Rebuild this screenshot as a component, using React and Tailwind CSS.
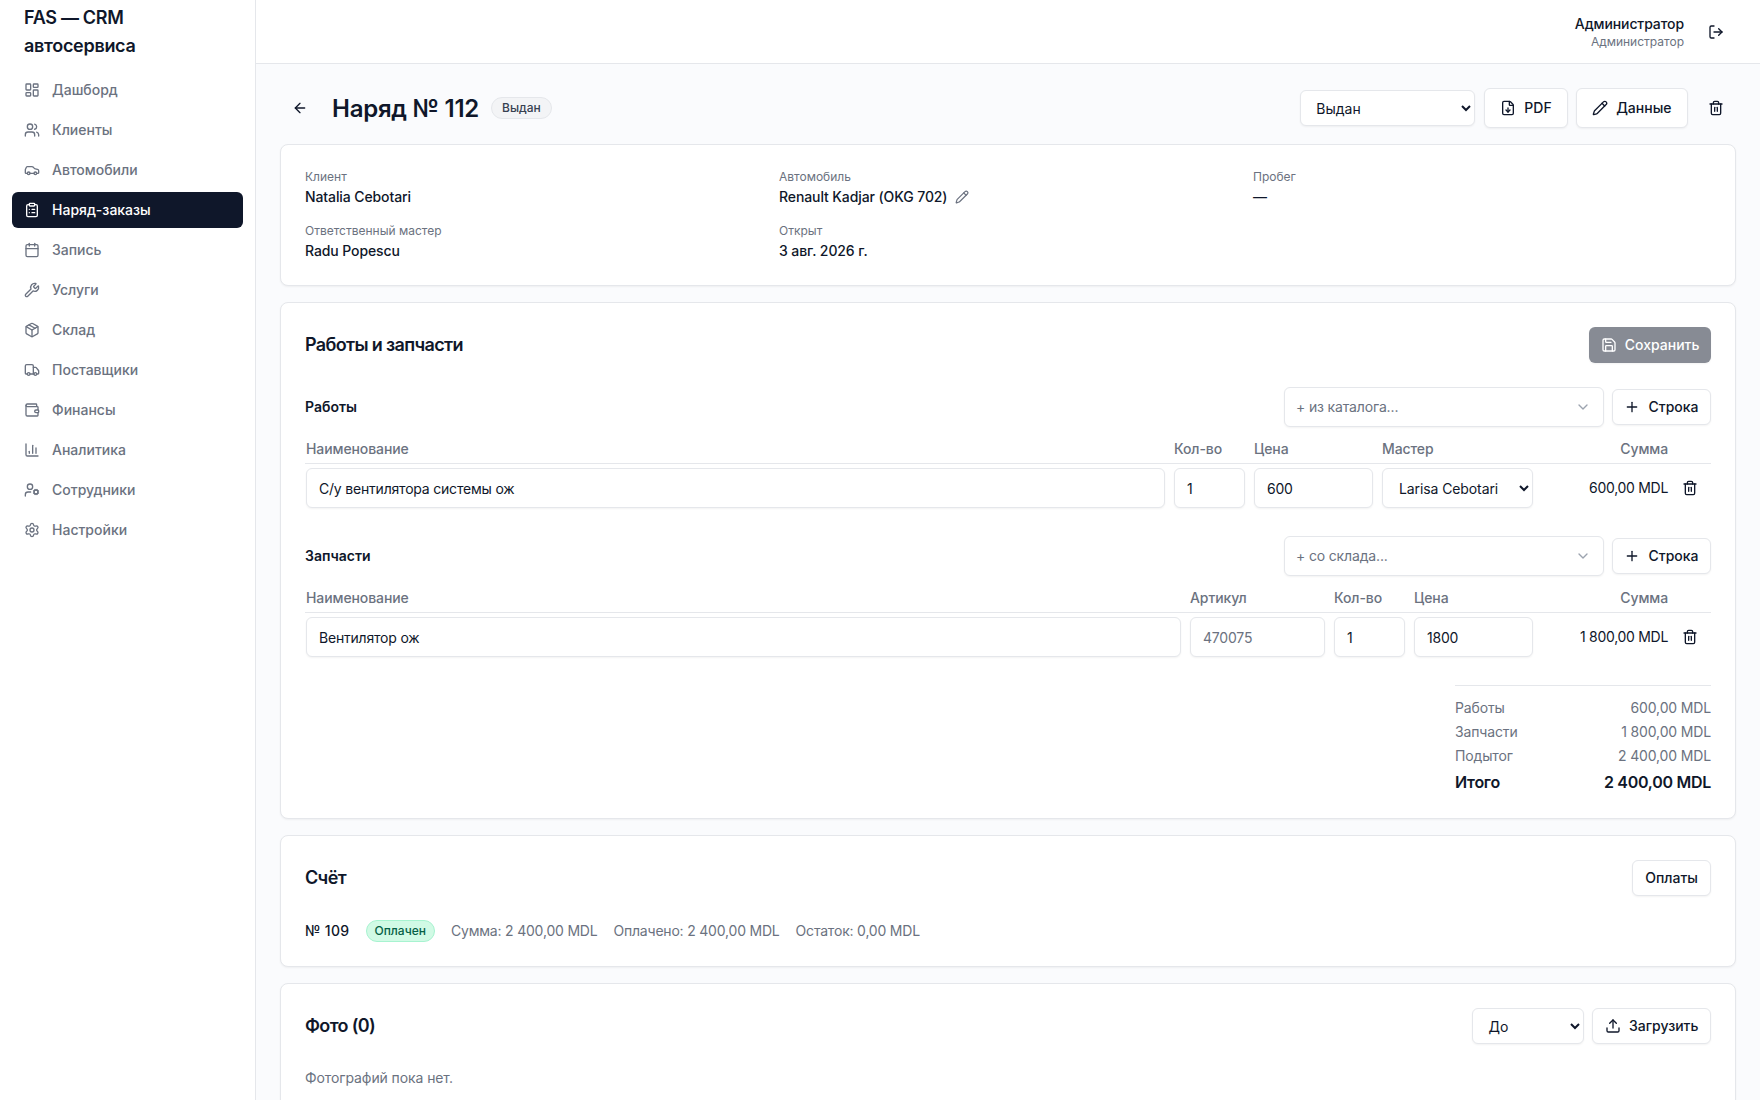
import React from "react";
import {
  LayoutDashboard, Users, Car, ClipboardList, Calendar, Wrench, Package, Truck, Wallet, ChartColumn,
  UserCog, Settings, LogOut, ArrowLeft, FileDown, Pencil, Trash2, Save, Plus, ChevronDown, Upload,
} from "lucide-react";

const nav = [
  [LayoutDashboard, "Дашборд"],
  [Users, "Клиенты"],
  [Car, "Автомобили"],
  [ClipboardList, "Наряд-заказы", true],
  [Calendar, "Запись"],
  [Wrench, "Услуги"],
  [Package, "Склад"],
  [Truck, "Поставщики"],
  [Wallet, "Финансы"],
  [ChartColumn, "Аналитика"],
  [UserCog, "Сотрудники"],
  [Settings, "Настройки"],
];

const btn = "inline-flex items-center justify-center gap-2 h-9 rounded-md border border-[#e5e7eb] bg-white text-sm font-medium text-[#0f172a] shadow-xs";
const input = "h-10 w-full rounded-md border border-[#e5e7eb] bg-white px-3 text-sm tracking-[-0.2px] text-[#0f172a] shadow-xs outline-none";
const card = "rounded-lg border border-[#e5e7eb] bg-white p-6 shadow-xs";
const h2 = "text-lg font-semibold tracking-[-0.65px]";
const workCols = "grid pl-px grid-cols-[859px_71px_119px_151px_126px_26px] gap-x-[9px]";
const partCols = "grid pl-px grid-cols-[875px_135px_71px_119px_126px_26px] gap-x-[9px]";
const thead = "border-b border-[#e5e7eb] pb-1 text-sm leading-5 font-medium tracking-[-0.1px] text-[#6b7280]";

function Field({ label, children }) {
  return (
    <div>
      <div className="text-xs leading-4 text-[#6b7280]">{label}</div>
      <div className="mt-0.5 flex items-center gap-2 text-sm leading-5 font-medium tracking-[-0.1px] text-[#0f172a]">{children}</div>
    </div>
  );
}

function Combo({ text }) {
  return (
    <div className="flex h-10 w-80 items-center justify-between rounded-md border border-[#e5e7eb] bg-white pr-3 pl-[11px] text-sm tracking-[-0.15px] text-[#6b7280] shadow-xs">
      <span>{text}</span>
      <ChevronDown className="size-4 text-[#9ca3af]" />
    </div>
  );
}

function SectionHead({ title, combo }) {
  return (
    <div className="flex items-center justify-between">
      <div className="text-sm font-semibold text-[#0f172a]">{title}</div>
      <div className="flex items-center gap-2">
        <Combo text={combo} />
        <button className={btn + " px-[11.5px]"}><Plus className="size-4" />Строка</button>
      </div>
    </div>
  );
}

function Sum({ value }) {
  return (
    <>
      <div className="text-right text-sm tracking-[-0.3px] text-[#0f172a]">{value}</div>
      <div className="flex justify-center"><Trash2 className="size-4 text-[#0f172a]" /></div>
    </>
  );
}

function Total({ label, value }) {
  return (
    <div className="flex justify-between text-sm leading-5 tracking-[-0.15px] text-[#6b7280]">
      <span>{label}</span>
      <span>{value}</span>
    </div>
  );
}

export default function App() {
  return (
    <div className="flex h-[1100px] overflow-hidden bg-[#fafbfd] font-['Inter',sans-serif] text-[#0f172a]">
      <aside className="w-64 shrink-0 border-r border-[#e5e7eb] bg-white">
        <div className="flex h-16 items-center px-6 text-lg leading-7 font-semibold tracking-[-0.3px]">FAS — CRM автосервиса</div>
        <nav className="flex flex-col gap-1 px-3 pt-2">
          {nav.map(([Icon, label, active]) => (
            <div
              key={label}
              className={active
                ? "flex h-9 items-center gap-3 rounded-md bg-[#0f172a] px-3 text-sm font-medium text-white"
                : "flex h-9 items-center gap-3 rounded-md px-3 text-sm font-medium text-[#6b7280]"}
            >
              <Icon className="size-4" />
              <span>{label}</span>
            </div>
          ))}
        </nav>
      </aside>
      <div className="flex min-w-0 flex-1 flex-col">
        <header className="flex h-16 shrink-0 items-center justify-end gap-3 border-b border-[#e5e7eb] bg-white px-6">
          <div className="text-right">
            <div className="text-sm leading-5 font-medium tracking-[-0.1px]">Администратор</div>
            <div className="text-xs leading-4 text-[#6b7280]">Администратор</div>
          </div>
          <button className="flex size-10 items-center justify-center"><LogOut className="size-4" /></button>
        </header>
        <main className="flex flex-col gap-4 p-6">
          <div className="flex h-10 items-center justify-between">
            <div className="flex items-center gap-3">
              <button className="flex size-10 items-center justify-center"><ArrowLeft className="size-4" /></button>
              <h1 className="pt-0.5 text-2xl font-semibold tracking-[-0.25px]">Наряд № 112</h1>
              <span className="flex h-[22px] items-center rounded-full border border-[#e5e7eb] bg-[#f3f4f6] px-2.5 text-xs font-medium text-[#374151]">Выдан</span>
            </div>
            <div className="flex items-center gap-2">
              <select defaultValue="Выдан" className="mr-px h-9 w-[175px] rounded-md border border-[#e5e7eb] bg-white pr-3 pl-[11px] text-sm shadow-xs outline-none">
                <option>Выдан</option>
              </select>
              <button className={btn + " h-10 px-[15px]"}><FileDown className="size-4" />PDF</button>
              <button className={btn + " h-10 px-[15.5px]"}><Pencil className="size-4" />Данные</button>
              <button className="flex size-10 items-center justify-center"><Trash2 className="size-4" /></button>
            </div>
          </div>

          <section className={card}>
            <div className="grid grid-cols-3 gap-4">
              <Field label="Клиент">Natalia Cebotari</Field>
              <Field label="Автомобиль">Renault Kadjar (OKG 702) <Pencil className="size-3.5 text-[#6b7280]" /></Field>
              <Field label="Пробег">—</Field>
              <Field label="Ответственный мастер">Radu Popescu</Field>
              <Field label="Открыт">3 авг. 2026 г.</Field>
            </div>
          </section>

          <section className={card}>
            <div className="flex items-center justify-between">
              <h2 className={h2}>Работы и запчасти</h2>
              <button className="inline-flex h-9 items-center justify-center gap-2 rounded-md bg-[#878b94] px-[11.5px] text-sm font-medium text-white shadow-xs"><Save className="size-4" />Сохранить</button>
            </div>

            <div className="mt-6"><SectionHead title="Работы" combo="+ из каталога..." /></div>
            <div className={"mt-3 " + workCols + " " + thead}>
              <span>Наименование</span><span>Кол-во</span><span>Цена</span><span>Мастер</span><span className="text-right">Сумма</span><span />
            </div>
            <div className={"mt-1 items-center " + workCols}>
              <input className={input} defaultValue="С/у вентилятора системы ож" />
              <input className={input} defaultValue="1" />
              <input className={input} defaultValue="600" />
              <select defaultValue="Larisa Cebotari" className="h-10 w-full rounded-md border border-[#e5e7eb] bg-white px-3 text-sm tracking-[-0.1px] shadow-xs outline-none">
                <option>Larisa Cebotari</option>
              </select>
              <Sum value="600,00 MDL" />
            </div>

            <div className="mt-7"><SectionHead title="Запчасти" combo="+ со склада..." /></div>
            <div className={"mt-3 " + partCols + " " + thead}>
              <span>Наименование</span><span>Артикул</span><span>Кол-во</span><span>Цена</span><span className="text-right">Сумма</span><span />
            </div>
            <div className={"mt-1 items-center " + partCols}>
              <input className={input} defaultValue="Вентилятор ож" />
              <input className={input + " text-[#6b7280]"} defaultValue="470075" />
              <input className={input} defaultValue="1" />
              <input className={input} defaultValue="1800" />
              <Sum value="1 800,00 MDL" />
            </div>

            <div className="mt-7 ml-auto w-64 space-y-1 border-t border-[#e5e7eb] pt-3">
              <Total label="Работы" value="600,00 MDL" />
              <Total label="Запчасти" value="1 800,00 MDL" />
              <Total label="Подытог" value="2 400,00 MDL" />
              <div className="flex justify-between text-base leading-6 font-semibold tracking-[-0.28px] text-[#0f172a]">
                <span>Итого</span><span>2 400,00 MDL</span>
              </div>
            </div>
          </section>

          <section className={card}>
            <div className="flex items-center justify-between">
              <h2 className={h2}>Счёт</h2>
              <button className={btn + " px-3"}>Оплаты</button>
            </div>
            <div className="mt-6 flex h-[22px] items-center gap-4 text-sm tracking-[-0.2px] text-[#6b7280]">
              <span className="font-medium tracking-[0.35px] text-[#0f172a]">№ 109</span>
              <span className="flex h-[22px] items-center rounded-full border border-[#a7f3d0] bg-[#d1fae5] px-2 text-xs font-medium tracking-normal text-[#065f46]">Оплачен</span>
              <span>Сумма: 2 400,00 MDL</span>
              <span>Оплачено: 2 400,00 MDL</span>
              <span>Остаток: 0,00 MDL</span>
            </div>
          </section>

          <section className={card}>
            <div className="flex items-center justify-between">
              <h2 className={h2}>Фото (0)</h2>
              <div className="flex items-center gap-2">
                <select defaultValue="До" className="h-9 w-28 rounded-md border border-[#e5e7eb] bg-white pr-3 pl-[11px] text-sm shadow-xs outline-none">
                  <option>До</option>
                </select>
                <button className={btn + " px-[11.5px]"}><Upload className="size-4" />Загрузить</button>
              </div>
            </div>
            <p className="mt-6 text-sm tracking-[-0.1px] text-[#6b7280]">Фотографий пока нет.</p>
          </section>
        </main>
      </div>
    </div>
  );
}
